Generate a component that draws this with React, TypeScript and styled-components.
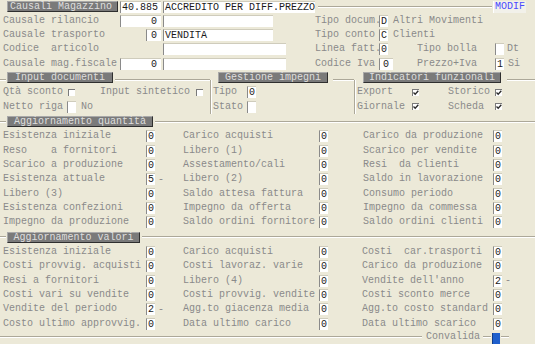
import React from "react";
import styled, { createGlobalStyle, css } from "styled-components";

const GlobalStyle = createGlobalStyle`
  html, body { margin: 0; padding: 0; background: #ece9d8; }
`;

const Screen = styled.div`
  width: 535px;
  height: 344px;
  overflow: hidden;
  background: #ece9d8;
  color: #8a8a8a;
  font-family: "Liberation Mono", "Courier New", monospace;
  font-size: 10px;
  white-space: pre;
  display: flex;
  flex-direction: column;
`;

const Line = styled.div<{ $h: number; $pl?: number }>`
  display: flex;
  align-items: center;
  flex: none;
  height: ${p => p.$h}px;
  padding-left: ${p => p.$pl ?? 0}px;
`;

const Label = styled.span<{ $w?: number; $ml?: number }>`
  flex: none;
  width: ${p => (p.$w ? `${p.$w}px` : "auto")};
  margin-left: ${p => p.$ml ?? 0}px;
  color: #8a8a8a;
  line-height: 12px;
`;

const Slot = styled.div<{ $w: number }>`
  flex: none;
  width: ${p => p.$w}px;
  display: flex;
  justify-content: flex-end;
`;

const Field = styled.span<{ $w: number; $ml?: number; $right?: boolean }>`
  flex: none;
  box-sizing: border-box;
  width: ${p => p.$w}px;
  height: 12px;
  line-height: 11px;
  margin-left: ${p => p.$ml ?? 0}px;
  padding: ${p => (p.$right ? "0 4px 0 1px" : "0 1px")};
  background: #fff;
  border-left: 1px solid #8a8a8a;
  border-top: 1px solid #cfccbc;
  color: #1a1a1a;
  text-align: ${p => (p.$right ? "right" : "left")};
  overflow: hidden;
`;

const Caption = styled.div<{ $w: number; $ml?: number; $left?: boolean }>`
  flex: none;
  box-sizing: border-box;
  width: ${p => p.$w}px;
  height: 11px;
  line-height: 9px;
  margin-left: ${p => p.$ml ?? 0}px;
  padding-left: ${p => (p.$left ? 2 : 0)}px;
  background: #7a7a7a;
  color: #dedede;
  border: 1px solid;
  border-color: #a9a9a9 #2f2f2f #2f2f2f #a9a9a9;
  text-align: ${p => (p.$left ? "left" : "center")};
`;

const Rule = styled.div<{ $w?: number; $ml?: number; $dy?: number }>`
  flex: ${p => (p.$w ? "none" : "1")};
  width: ${p => (p.$w ? `${p.$w}px` : "auto")};
  height: 0;
  margin-left: ${p => p.$ml ?? 0}px;
  margin-top: ${p => p.$dy ?? 0}px;
  border-top: 1px solid #aca899;
  border-bottom: 1px solid #fff;
`;

const Modif = styled.span`
  flex: none;
  box-sizing: border-box;
  width: 33px;
  height: 12px;
  line-height: 11px;
  margin-left: 1px;
  padding-left: 1px;
  background: #f2f1ea;
  border-left: 1px solid #fff;
  color: #4a4aff;
`;

const Tick = styled.span<{ $ml?: number }>`
  flex: none;
  box-sizing: border-box;
  width: 7px;
  height: 7px;
  margin-left: ${p => p.$ml ?? 0}px;
  background: #fff;
  border-left: 1px solid #7a7a7a;
  border-top: 1px solid #7a7a7a;
  display: flex;
  align-items: center;
  justify-content: center;
`;

const Check = ({ on, ml }: { on?: boolean; ml?: number }) => (
  <Tick $ml={ml}>
    {on && (
      <svg width="6" height="6" viewBox="0 0 6 6">
        <path d="M0.5 2.5 L2.2 4.3 L5.3 0.8" fill="none" stroke="#2a2a2a" strokeWidth="1.3" />
      </svg>
    )}
  </Tick>
);

const Groups = styled.div`
  display: flex;
  flex: none;
  height: 43px;
`;

const Group = styled.div<{ $w: number }>`
  flex: none;
  width: ${p => p.$w}px;
  display: flex;
  flex-direction: column;
`;

const GroupBody = styled.div<{ $divided?: boolean; $pl: number }>`
  flex: 1;
  padding-left: ${p => p.$pl}px;
  ${p =>
    p.$divided &&
    css`
      border-left: 1px solid #aca899;
      box-shadow: inset 1px 0 #fff;
      margin-top: -5px;
      padding-top: 5px;
    `}
`;

const Table = styled.div`
  display: grid;
  grid-template-columns: 175px 180px 180px;
  flex: none;
`;

const Column = styled.div<{ $pl: number }>`
  display: flex;
  flex-direction: column;
  padding-left: ${p => p.$pl}px;
`;

const Suffix = styled.span`
  margin-left: 3px;
  color: #8a8a8a;
`;

const Confirm = styled.span`
  flex: none;
  align-self: flex-end;
  width: 7px;
  height: 11px;
  margin-left: 1px;
  background: #1f5fcc;
  border-left: 1px solid #0f3d8c;
`;

type Item = [string, string, boolean?];

const quantCols: { pl: number; lw: number; rows: Item[] }[] = [
  {
    pl: 3,
    lw: 143,
    rows: [
      ["Esistenza iniziale", "0"],
      ["Reso    a fornitori", "0"],
      ["Scarico a produzione", "0"],
      ["Esistenza attuale", "5", true],
      ["Libero (3)", "0"],
      ["Esistenza confezioni", "0"],
      ["Impegno da produzione", "0"],
    ],
  },
  {
    pl: 8,
    lw: 136,
    rows: [
      ["Carico acquisti", "0"],
      ["Libero (1)", "0"],
      ["Assestamento/cali", "0"],
      ["Libero (2)", "0"],
      ["Saldo attesa fattura", "0"],
      ["Impegno da offerta", "0"],
      ["Saldo ordini fornitore", "0"],
    ],
  },
  {
    pl: 8,
    lw: 130,
    rows: [
      ["Carico da produzione", "0"],
      ["Scarico per vendite", "0"],
      ["Resi  da clienti", "0"],
      ["Saldo in lavorazione", "0"],
      ["Consumo periodo", "0"],
      ["Impegno da commessa", "0"],
      ["Saldo ordini clienti", "0"],
    ],
  },
];

const valueCols: { pl: number; lw: number; rows: Item[] }[] = [
  {
    pl: 3,
    lw: 143,
    rows: [
      ["Esistenza iniziale", "0"],
      ["Costi provvig. acquisti", "0"],
      ["Resi a fornitori", "0"],
      ["Costi vari su vendite", "0"],
      ["Vendite del periodo", "2", true],
      ["Costo ultimo approvvig.", "0"],
    ],
  },
  {
    pl: 8,
    lw: 136,
    rows: [
      ["Carico acquisti", "0"],
      ["Costi lavoraz. varie", "0"],
      ["Libero (4)", "0"],
      ["Costi provvig. vendite", "0"],
      ["Agg.to giacenza media", "0"],
      ["Data ultimo carico", "0"],
    ],
  },
  {
    pl: 7,
    lw: 131,
    rows: [
      ["Costi  car.trasporti", "0"],
      ["Carico da produzione", "0"],
      ["Vendite dell'anno", "2", true],
      ["Costi sconto merce", "0"],
      ["Agg.to costo standard", "0"],
      ["Data ultimo scarico", "0"],
    ],
  },
];

const Update = ({ cols }: { cols: typeof quantCols }) => (
  <Table>
    {cols.map((col, i) => (
      <Column key={i} $pl={col.pl}>
        {col.rows.map(([label, value, minus]) => (
          <Line key={label} $h={14.33}>
            <Label $w={col.lw}>{label}</Label>
            <Field $w={9}>{value}</Field>
            {minus && <Suffix>-</Suffix>}
          </Line>
        ))}
      </Column>
    ))}
  </Table>
);

export default function App() {
  return (
    <Screen>
      <GlobalStyle />

      <Line $h={13.6} $pl={7}>
        <Caption $w={111} $left>Causali Magazzino</Caption>
        <Field $w={41} $ml={2} $right>40.885</Field>
        <Field $w={152} $ml={2}>ACCREDITO PER DIFF.PREZZO</Field>
        <Rule $ml={3} />
        <Modif>MODIF</Modif>
        <Label $w={9} />
      </Line>
      <Line $h={14.3} $pl={3}>
        <Label $w={117}>Causale rilancio</Label>
        <Field $w={41} $right>0</Field>
        <Field $w={110} $ml={2} />
        <Label $w={64} $ml={42}>Tipo docum.</Label>
        <Field $w={9}>D</Field>
        <Label $ml={5}>Altri Movimenti</Label>
      </Line>
      <Line $h={14.3} $pl={3}>
        <Label $w={117}>Causale trasporto</Label>
        <Slot $w={41}>
          <Field $w={15} $right>0</Field>
        </Slot>
        <Field $w={110} $ml={2}>VENDITA</Field>
        <Label $w={64} $ml={42}>Tipo conto</Label>
        <Field $w={9}>C</Field>
        <Label $ml={5}>Clienti</Label>
      </Line>
      <Line $h={14.3} $pl={3}>
        <Label $w={117}>Codice  articolo</Label>
        <Slot $w={41} />
        <Field $w={123} $ml={2} />
        <Label $w={64} $ml={29}>Linea fatt.</Label>
        <Field $w={9}>0</Field>
        <Label $w={78} $ml={29}>Tipo bolla</Label>
        <Field $w={9} />
        <Label $ml={3}>Dt</Label>
      </Line>
      <Line $h={14.3} $pl={3}>
        <Label $w={117}>Causale mag.fiscale</Label>
        <Field $w={41} $right>0</Field>
        <Field $w={123} $ml={2} />
        <Label $w={64} $ml={29}>Codice Iva</Label>
        <Field $w={14} $right>0</Field>
        <Label $w={78} $ml={24}>Prezzo+Iva</Label>
        <Field $w={9}>1</Field>
        <Label $ml={4}>Si</Label>
      </Line>

      <Groups>
        <Group $w={210}>
          <Line $h={14}>
            <Rule $w={6} $dy={5} />
            <Caption $w={106} $ml={1}>Input documenti</Caption>
            <Rule $ml={2} $dy={5} />
          </Line>
          <GroupBody $pl={3}>
            <Line $h={14.5}>
              <Label>Qtà sconto</Label>
              <Check ml={5} />
              <Label $ml={25}>Input sintetico</Label>
              <Check ml={6} />
            </Line>
            <Line $h={14.5}>
              <Label>Netto riga</Label>
              <Field $w={9} $ml={4} />
              <Label $ml={5}>No</Label>
            </Line>
          </GroupBody>
        </Group>
        <Group $w={144}>
          <Line $h={14} $pl={8}>
            <Caption $w={110}>Gestione impegni</Caption>
            <Rule $ml={5} $dy={5} />
          </Line>
          <GroupBody $divided $pl={2}>
            <Line $h={14.5}>
              <Label $w={34}>Tipo</Label>
              <Field $w={9}>0</Field>
            </Line>
            <Line $h={14.5}>
              <Label $w={34}>Stato</Label>
              <Field $w={9} />
            </Line>
          </GroupBody>
        </Group>
        <Group $w={181}>
          <Line $h={14} $pl={9}>
            <Caption $w={138}>Indicatori funzionali</Caption>
            <Rule $ml={6} $dy={5} />
          </Line>
          <GroupBody $divided $pl={2}>
            <Line $h={14.5}>
              <Label $w={55}>Export</Label>
              <Check on />
              <Label $w={47} $ml={29}>Storico</Label>
              <Check on />
            </Line>
            <Line $h={14.5}>
              <Label $w={55}>Giornale</Label>
              <Check on />
              <Label $w={47} $ml={29}>Scheda</Label>
              <Check on />
            </Line>
          </GroupBody>
        </Group>
      </Groups>

      <Line $h={15.5}>
        <Rule $w={6} />
        <Caption $w={146} $ml={1}>Aggiornamento quantità</Caption>
        <Rule $ml={2} />
      </Line>
      <Update cols={quantCols} />

      <Line $h={15.2}>
        <Rule $w={6} />
        <Caption $w={133} $ml={1}>Aggiornamento valori</Caption>
        <Rule $ml={2} />
      </Line>
      <Update cols={valueCols} />

      <Line $h={13}>
        <Rule />
        <Label $ml={4}>Convalida</Label>
        <Rule $w={8} $ml={3} />
        <Confirm />
        <Rule $w={8} $ml={1} />
        <Label $w={26} />
      </Line>
    </Screen>
  );
}
